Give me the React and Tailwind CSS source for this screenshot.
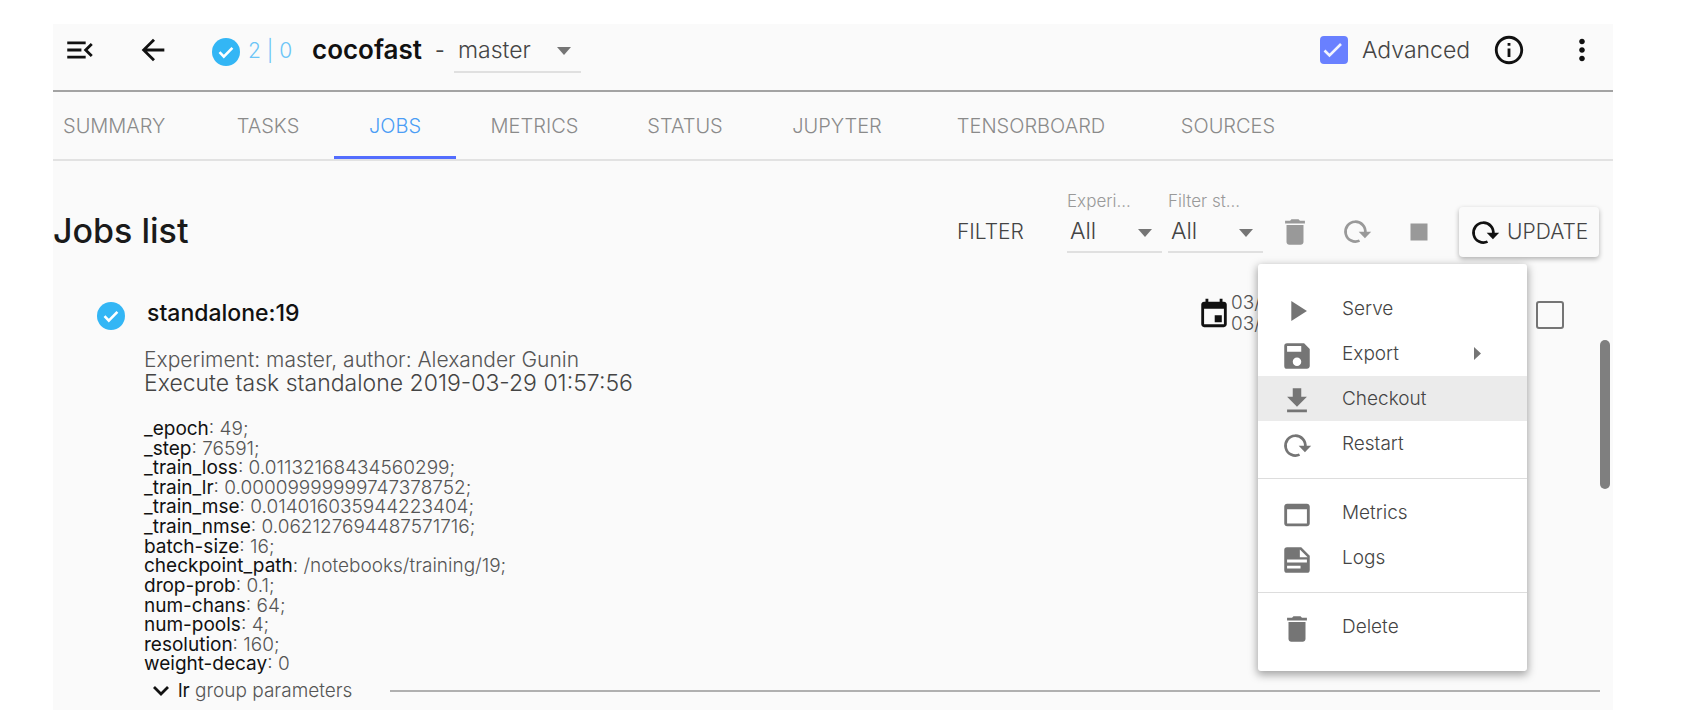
import React from "react";
import {
  MdMenuOpen,
  MdArrowBack,
  MdInfoOutline,
  MdMoreVert,
  MdDelete,
  MdStop,
  MdPlayArrow,
  MdSave,
} from "react-icons/md";

function CheckBadge({ className }) {
  return (
    <svg viewBox="0 0 28 28" className={className} aria-hidden="true">
      <circle cx="14" cy="14" r="14" fill="#33b6f5" />
      <path d="M7.5 14.2l4.3 4.4 8.6-8.8" fill="none" stroke="#fff" strokeWidth="2.6" />
    </svg>
  );
}

function RestartIcon({ className }) {
  return (
    <svg viewBox="0 0 24 24" className={className} aria-hidden="true">
      <path d="M17.8 12.8a7 7 0 1 0-4 5.3" fill="none" stroke="currentColor" strokeWidth="1.9" />
      <path d="M13.2 11.8h8.8l-4.4 4.600z" fill="currentColor" />
    </svg>
  );
}

function DownloadIcon({ className }) {
  return (
    <svg viewBox="0 0 24 24" className={className} fill="currentColor" aria-hidden="true">
      <path d="M19 9h-4V3H9v6H5l7 7 7-7zM5 18v2h14v-2H5z" />
    </svg>
  );
}

function WindowIcon({ className }) {
  return (
    <svg viewBox="0 0 24 24" className={className} fill="currentColor" aria-hidden="true">
      <path d="M19 4H5c-1.11 0-2 .9-2 2v12c0 1.1.89 2 2 2h14c1.1 0 2-.9 2-2V6c0-1.1-.89-2-2-2zm0 14H5V8h14v10z" />
    </svg>
  );
}

function LogsIcon({ className }) {
  return (
    <svg viewBox="0 0 24 24" className={className} aria-hidden="true">
      <path
        fill="currentColor"
        fillRule="evenodd"
        d="M5 3h10l6 6v10a2 2 0 0 1-2 2H5a2 2 0 0 1-2-2V5a2 2 0 0 1 2-2zm9 1.5V10h5.5zM5 11.7v2h14v-2zM5 16v2h9.5v-2z"
      />
    </svg>
  );
}

function CalendarIcon({ className }) {
  return (
    <svg viewBox="0 0 24 24" className={className} fill="currentColor" aria-hidden="true">
      <path d="M17.5 13.500h-5v5h5v-5zM16 2v2H8V2H6v2H5c-1.110 0-1.990.9-1.990 2L3 20c0 1.100.89 2 2 2h14c1.100 0 2-.9 2-2V6c0-1.100-.9-2-2-2h-1V2h-2zm3 18H5V9h14v11z" />
    </svg>
  );
}

function Caret() {
  return (
    <svg
      viewBox="0 0 14 8"
      className="pointer-events-none absolute right-[10px] top-1/2 h-2 w-[14px] -translate-y-1/2 fill-[#757575]"
      aria-hidden="true"
    >
      <path d="M0 0h14L7 8z" />
    </svg>
  );
}

function FilterSelect({ id, label }) {
  return (
    <div className="mb-1 w-[95px]">
      <label htmlFor={id} className="block h-5 text-[17px] leading-5 text-[#999]">
        {label}
      </label>
      <div className="relative mt-px">
        <select
          id={id}
          className="h-[41px] w-full appearance-none border-b-2 border-[#e0e0e0] bg-transparent pl-[3px] text-[23px] text-[#444] outline-none"
        >
          <option>All</option>
        </select>
        <Caret />
      </div>
    </div>
  );
}

const tabs = [
  { name: "SUMMARY", width: "w-[149px] pl-[10px] text-left" },
  { name: "TASKS", width: "w-[132px]" },
  { name: "JOBS", width: "w-[122px]", active: true },
  { name: "METRICS", width: "w-[157px]" },
  { name: "STATUS", width: "w-[144px]" },
  { name: "JUPYTER", width: "w-[160px]" },
  { name: "TENSORBOARD", width: "w-[228px]" },
  { name: "SOURCES", width: "w-[166px]" },
];

const params = [
  ["_epoch", "49;"],
  ["_step", "76591;"],
  ["_train_loss", "0.01132168434560299;"],
  ["_train_lr", "0.00009999999747378752;"],
  ["_train_mse", "0.014016035944223404;"],
  ["_train_nmse", "0.062127694487571716;"],
  ["batch-size", "16;"],
  ["checkpoint_path", "/notebooks/training/19;"],
  ["drop-prob", "0.1;"],
  ["num-chans", "64;"],
  ["num-pools", "4;"],
  ["resolution", "160;"],
  ["weight-decay", "0"],
];

const menuGroups = [
  [
    { name: "Serve", Icon: MdPlayArrow },
    { name: "Export", Icon: MdSave, submenu: true },
    { name: "Checkout", Icon: DownloadIcon, active: true },
    { name: "Restart", Icon: RestartIcon },
  ],
  [
    { name: "Metrics", Icon: WindowIcon },
    { name: "Logs", Icon: LogsIcon },
  ],
  [{ name: "Delete", Icon: MdDelete }],
];

function Header() {
  return (
    <header className="flex h-[68px] items-center border-b-2 border-[#a3a3a3] pb-[15px] pl-[10px] pr-[14px] text-[#111]">
      <button aria-label="Toggle menu">
        <MdMenuOpen className="size-[34px]" />
      </button>
      <button aria-label="Back" className="ml-[39px]">
        <MdArrowBack className="size-[34px]" />
      </button>
      <CheckBadge className="ml-[42px] mt-1 size-7" />
      <span className="ml-2 w-16 whitespace-nowrap pt-[2px] text-[21px] font-light text-[#6cc5f7]">2 | 0</span>
      <h1 className="w-[110px] whitespace-nowrap text-[26px] font-semibold leading-8">cocofast</h1>
      <span className="ml-[13px] w-[19px] pt-[2px] text-[21px] text-[#444]">-</span>
      <div className="relative mt-[3px] w-[127px]">
        <select
          aria-label="Experiment branch"
          className="h-[43px] w-full appearance-none border-b-2 border-[#e0e0e0] bg-transparent pl-1 text-[23px] font-light text-[#444] outline-none"
        >
          <option>master</option>
        </select>
        <Caret />
      </div>
      <label className="ml-auto flex items-center text-[23px] font-light text-[#444]">
        <span className="relative mr-[14px] size-7">
          <input
            type="checkbox"
            defaultChecked
            className="peer block size-7 appearance-none rounded-sm border-2 border-[#757575] checked:border-[#6980ff] checked:bg-[#6980ff]"
          />
          <svg
            viewBox="0 0 28 28"
            className="pointer-events-none absolute inset-0 hidden size-7 peer-checked:block"
            aria-hidden="true"
          >
            <path d="M4.5 14.5l5 5 11.5-11.5" fill="none" stroke="#f2f4ff" strokeWidth="2.6" />
          </svg>
        </span>
        <span className="w-[111px] pt-[2px]">Advanced</span>
      </label>
      <button aria-label="Information" className="ml-[19px]">
        <MdInfoOutline className="size-[34px]" />
      </button>
      <button aria-label="More options" className="ml-[39px]">
        <MdMoreVert className="size-[34px]" />
      </button>
    </header>
  );
}

function Tabs() {
  return (
    <nav className="flex h-[69px] border-b-2 border-[#e2e2e2]">
      {tabs.map((tab) => (
        <button
          key={tab.name}
          className={`relative shrink-0 text-center text-[20px] font-light ${tab.width} ${
            tab.active ? "text-[#4b9df5]" : "text-[#8a8a8a]"
          }`}
        >
          {tab.name}
          {tab.active && <span className="absolute inset-x-0 bottom-0 h-[3px] bg-[#536dfe]" />}
        </button>
      ))}
    </nav>
  );
}

function Toolbar() {
  return (
    <div className="flex items-end pr-[14px] pt-[30px]">
      <h2 className="flex h-[53px] items-center whitespace-nowrap text-[34px] font-medium text-[#1a1a1a]">
        Jobs list
      </h2>
      <button className="ml-auto h-[50px] w-[110px] text-left text-[21px] font-light text-[#444]">
        FILTER
      </button>
      <div className="flex gap-[6px] font-light">
        <FilterSelect id="experiment-filter" label="Experi..." />
        <FilterSelect id="status-filter" label="Filter st..." />
      </div>
      <div className="ml-[15px] flex h-[50px] items-center text-[#999]">
        <button aria-label="Delete selected">
          <MdDelete className="size-[34px]" />
        </button>
        <button aria-label="Restart selected" className="ml-7">
          <RestartIcon className="size-[34px]" />
        </button>
        <button aria-label="Stop selected" className="ml-7">
          <MdStop className="size-[34px]" />
        </button>
      </div>
      <button className="ml-[23px] flex h-[50px] w-[140px] items-center rounded-sm pl-[9px] text-[21px] font-light text-[#444] shadow-[0_2px_5px_rgba(0,0,0,0.3)]">
        <RestartIcon className="mt-[2px] size-[34px] text-[#111]" />
        <span className="ml-[5px]">UPDATE</span>
      </button>
    </div>
  );
}

function JobMenu() {
  return (
    <div
      role="menu"
      className="absolute -top-[29px] right-[86px] w-[269px] rounded-[3px] bg-white pb-[10px] pt-[10px] shadow-[0_3px_8px_1px_rgba(0,0,0,0.35)]"
    >
      {menuGroups.map((group, i) => (
        <div key={i} className={i > 0 ? "border-t border-[#ddd] pb-3 pt-[11px]" : "py-3"}>
          {group.map(({ name, Icon, submenu, active }) => (
            <button
              key={name}
              role="menuitem"
              className={`flex h-[45px] w-full items-center pl-[22px] text-[19px] font-light text-[#444] ${
                active ? "bg-[#ebebeb]" : ""
              }`}
            >
              <Icon className="mt-1 size-[34px] text-[#757575]" />
              <span className="ml-7 pt-px">{name}</span>
              {submenu && (
                <svg viewBox="0 0 7 13" className="ml-auto mr-[46px] h-[13px] w-[7px] fill-[#757575]" aria-hidden="true">
                  <path d="M0 0v13l7-6.5z" />
                </svg>
              )}
            </button>
          ))}
        </div>
      ))}
    </div>
  );
}

function Job() {
  return (
    <article className="relative mt-9 font-light">
      <div className="flex h-10 items-center pl-11 pr-[49px]">
        <CheckBadge className="mt-[6px] size-7" />
        <h3 className="ml-[22px] text-[23px] font-medium text-[#111]">standalone:19</h3>
        <div className="ml-auto flex h-10 w-[339px] items-center">
          <CalendarIcon className="size-[34px] text-[#111]" />
          <p className="whitespace-nowrap text-[19px] leading-[21px] text-[#555]">
            03/29/19
            <br />
            03/29/19
          </p>
        </div>
        <input
          type="checkbox"
          aria-label="Select standalone:19"
          className="mt-[3px] size-7 appearance-none rounded-[3px] border-2 border-[#757575]"
        />
      </div>
      <div className="mt-4 pl-[91px]">
        <p className="text-[21px] leading-[22px] text-[#555]">Experiment: master, author: Alexander Gunin</p>
        <p className="text-[23px] leading-6 text-[#444]">Execute task standalone 2019-03-29 01:57:56</p>
        <ul className="mt-6 grid h-[255px] auto-rows-fr text-[19px] leading-5 text-[#555]">
          {params.map(([key, value]) => (
            <li key={key}>
              <span className="font-normal text-[#111]">{key}</span>: {value}
            </li>
          ))}
        </ul>
      </div>
      <div className="mt-[6px] flex h-[22px] items-center pl-[98px] pr-[13px]">
        <button className="flex w-[239px] items-center text-[19px] leading-[22px] text-[#555]">
          <svg viewBox="0 0 20 20" className="size-5" fill="none" stroke="#111" strokeWidth="2.8" aria-hidden="true">
            <path d="M3 6l7 7 7-7" />
          </svg>
          <span className="ml-[7px]">
            <span className="font-normal text-[#111]">lr</span> group parameters
          </span>
        </button>
        <hr className="flex-1 border-t-2 border-[#b0b0b0]" />
      </div>
      <JobMenu />
      <div className="absolute right-[3px] top-[47px] h-[149px] w-[10px] rounded-full bg-[#7f7f7f]" />
    </article>
  );
}

export default function App() {
  return (
    <div className="flex min-h-screen flex-col bg-white pl-[53px] pr-[89px] pt-6 font-['Inter','Liberation_Sans',sans-serif]">
      <main className="flex-1 bg-[#fafafa]">
        <Header />
        <Tabs />
        <Toolbar />
        <Job />
      </main>
    </div>
  );
}
